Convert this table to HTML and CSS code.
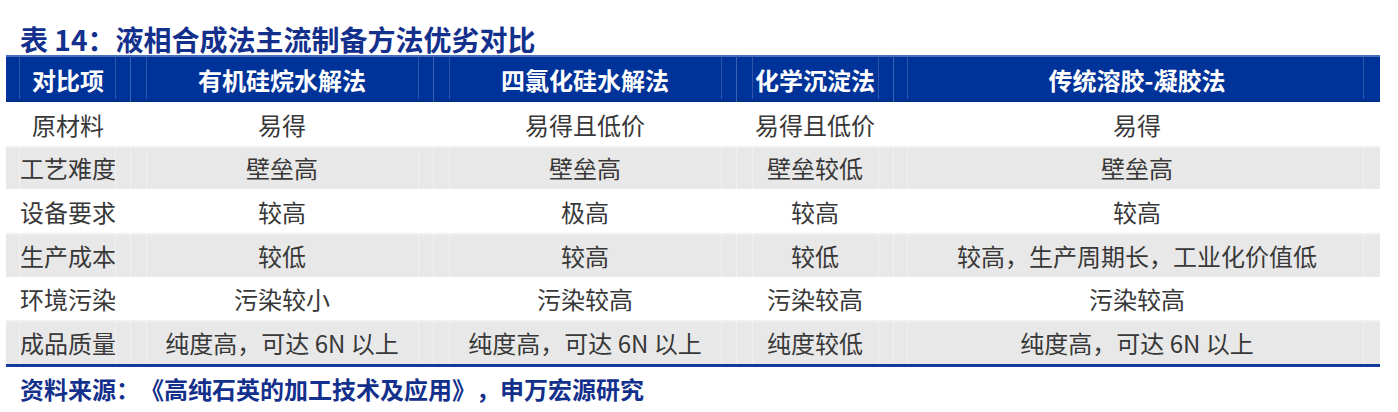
FILE: index.html
```html
<!DOCTYPE html>
<html lang="zh-CN">
<head>
<meta charset="utf-8">
<title>表 14：液相合成法主流制备方法优劣对比</title>
<link rel="stylesheet" href="styles.css">
</head>
<body>
<div class="page">
  <h1 class="title">表 14：液相合成法主流制备方法优劣对比</h1>
  <table class="cmp">
    <colgroup>
      <col class="c1"><col class="c2"><col class="c3"><col class="c4"><col class="c5">
    </colgroup>
    <thead>
      <tr>
        <th>对比项</th>
        <th>有机硅烷水解法</th>
        <th>四氯化硅水解法</th>
        <th>化学沉淀法</th>
        <th>传统溶胶-凝胶法</th>
      </tr>
    </thead>
    <tbody>
      <tr class="r-a h44"><td>原材料</td><td>易得</td><td>易得且低价</td><td>易得且低价</td><td>易得</td></tr>
      <tr class="r-b h43"><td>工艺难度</td><td>壁垒高</td><td>壁垒高</td><td>壁垒较低</td><td>壁垒高</td></tr>
      <tr class="r-a h44"><td>设备要求</td><td>较高</td><td>极高</td><td>较高</td><td>较高</td></tr>
      <tr class="r-b h44"><td>生产成本</td><td>较低</td><td>较高</td><td>较低</td><td>较高，生产周期长，工业化价值低</td></tr>
      <tr class="r-a h43"><td>环境污染</td><td>污染较小</td><td>污染较高</td><td>污染较高</td><td>污染较高</td></tr>
      <tr class="r-b h44"><td>成品质量</td><td>纯度高，可达 6N 以上</td><td>纯度高，可达 6N 以上</td><td>纯度较低</td><td>纯度高，可达 6N 以上</td></tr>
    </tbody>
  </table>
  <p class="source">资料来源：《高纯石英的加工技术及应用》，申万宏源研究</p>
</div>
</body>
</html>
```

FILE: styles.css
```css
html, body {
  margin: 0;
  padding: 0;
  background: #ffffff;
}

body {
  font-family: "Noto Sans CJK SC", "Noto Sans", "Liberation Sans", sans-serif;
  text-spacing-trim: space-all;
  width: 1398px;
  height: 412px;
  overflow: hidden;
}

.page {
  padding-top: 24px;
}

.title {
  margin: 0 0 1px 20px;
  font-size: 28px;
  line-height: 30px;
  height: 30px;
  font-weight: 700;
  color: #13308c;
  white-space: nowrap;
}

.cmp {
  margin-left: 6px;
  width: 1374px;
  border-collapse: separate;
  border-spacing: 0;
  table-layout: fixed;
  border-bottom: 3px solid #173b9b;
}

.c1 { width: 124px; }
.c2 { width: 303px; }
.c3 { width: 303px; }
.c4 { width: 157px; }
.c5 { width: 487px; }

.cmp th,
.cmp td {
  padding: 0;
  text-align: center;
  vertical-align: middle;
  white-space: nowrap;
  --inl: 15px;
  --inr: 14px;
}

.cmp th:first-child,
.cmp td:first-child { --inl: 13px; }
.cmp th:last-child,
.cmp td:last-child { --inl: 13px; --inr: 16px; }

/* header */
.cmp thead tr {
  height: 47px;
}

.cmp th {
  font-size: 24px;
  font-weight: 700;
  color: #ffffff;
  padding-top: 1px;
  background:
    linear-gradient(#4a6fbd, #4a6fbd) 0 0 / 100% 2px no-repeat,
    linear-gradient(#002f8e, #002f8e) 0 100% / 100% 3px no-repeat,
    linear-gradient(#2e56aa, #2e56aa) var(--inl) 0 / 1px 100% no-repeat,
    linear-gradient(#2e56aa, #2e56aa) right var(--inr) top 0 / 1px 100% no-repeat,
    #003399;
  border-left: 1px solid #3a60b2;
}

.cmp th:first-child {
  border-left: 0;
}

/* body */
.h44 { height: 44px; }
.h43 { height: 43px; }

.cmp td {
  font-size: 24px;
  color: #383838;
  border-left: 1px solid transparent;
}

.cmp td:first-child {
  border-left: 0;
}

.r-b td {
  background:
    linear-gradient(#f0f0f0, #f0f0f0) 0 0 / 100% 2px no-repeat,
    linear-gradient(#f1f1f1, #f1f1f1) var(--inl) 0 / 1px 100% no-repeat,
    linear-gradient(#f1f1f1, #f1f1f1) right var(--inr) top 0 / 1px 100% no-repeat,
    #e8e8e8;
  border-left-color: #f2f2f2;
}

.r-b td:first-child {
  border-left: 0;
}

.source {
  margin: 7px 0 0 20px;
  font-size: 24px;
  line-height: 30px;
  font-weight: 700;
  color: #13308c;
  white-space: nowrap;
}
```
